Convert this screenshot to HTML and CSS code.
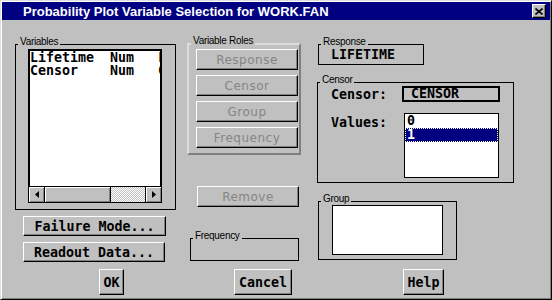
FILE: index.html
```html
<!DOCTYPE html>
<html lang="en">
<head>
    <meta charset="UTF-8">
    <title>Probability Plot Variable Selection</title>
    <link rel="stylesheet" href="styles.css">
</head>
<body>
    <div class="dialog">
        <div class="titlebar">
            <span class="title">Probability Plot Variable Selection for WORK.FAN</span>
            <button class="close-btn">
                <svg width="8" height="7" viewBox="0 0 8 7"><path d="M0.5 0.5L7.5 6.5M7.5 0.5L0.5 6.5" stroke="#000" stroke-width="1.6" fill="none"/></svg>
            </button>
        </div>

        <div class="dialog-body">
            <div class="col col-vars">
                <div class="group vars-group">
                    <span class="group-label">Variables</span>
                    <div class="listbox">
                        <div class="list-items">
                            <div class="list-row">Lifetime  Num   Lifetime</div>
                            <div class="list-row">Censor    Num   Censor</div>
                        </div>
                        <div class="hscroll">
                            <div class="sb-btn">
                                <svg width="4" height="7" viewBox="0 0 4 7"><path d="M4 0L0 3.5L4 7Z" fill="#000"/></svg>
                            </div>
                            <div class="sb-thumb"></div>
                            <div class="sb-track"></div>
                            <div class="sb-btn sb-right">
                                <svg width="4" height="7" viewBox="0 0 4 7"><path d="M0 0L4 3.5L0 7Z" fill="#000"/></svg>
                            </div>
                        </div>
                    </div>
                </div>
                <button class="btn btn-failure">Failure Mode...</button>
                <button class="btn btn-readout">Readout Data...</button>
            </div>

            <div class="col col-roles">
                <div class="roles-group">
                    <span class="group-label">Variable Roles</span>
                    <button class="btn role-btn" disabled>Response</button>
                    <button class="btn role-btn" disabled>Censor</button>
                    <button class="btn role-btn" disabled>Group</button>
                    <button class="btn role-btn" disabled>Frequency</button>
                </div>
                <button class="btn role-btn btn-remove" disabled>Remove</button>
                <div class="group freq-group">
                    <span class="group-label">Frequency</span>
                </div>
            </div>

            <div class="col col-info">
                <div class="group response-group">
                    <span class="group-label">Response</span>
                    LIFETIME
                </div>
                <div class="group censor-group">
                    <span class="group-label">Censor</span>
                    <div class="censor-row">
                        <span class="field-label">Censor:</span>
                        <span class="field-box">CENSOR</span>
                    </div>
                    <div class="values-row">
                        <span class="field-label values-label">Values:</span>
                        <div class="values-list">
                            <div class="value-row">0</div>
                            <div class="value-row selected">1</div>
                        </div>
                    </div>
                </div>
                <div class="group group-group">
                    <span class="group-label">Group</span>
                    <div class="white-box"></div>
                </div>
            </div>
        </div>

        <div class="dialog-footer">
            <button class="btn btn-ok">OK</button>
            <button class="btn btn-cancel">Cancel</button>
            <button class="btn btn-help">Help</button>
        </div>
    </div>
</body>
</html>
```

FILE: styles.css
```css
* {
    box-sizing: border-box;
}

body {
    margin: 0;
    background-color: #c0c0c0;
    font-family: "DejaVu Sans Mono", monospace;
}

.dialog {
    width: 552px;
    height: 300px;
    padding: 1px;
    background: #c0c0c0;
    border: 1px solid;
    border-color: #dfdfdf #000 #000 #dfdfdf;
    box-shadow: inset 1px 1px #fff, inset -1px -1px #808080;
    display: flex;
    flex-direction: column;
}

.titlebar {
    height: 18px;
    flex-shrink: 0;
    background: #000080;
    display: flex;
    align-items: center;
    padding: 0 4px 0 21px;
}

.title {
    flex: 1;
    color: #fff;
    font: bold 13px "Liberation Sans", Arial, sans-serif;
}

.close-btn {
    width: 14px;
    height: 14px;
    padding: 0;
    background: #c0c0c0;
    border: 1px solid;
    border-color: #fff #000 #000 #fff;
    box-shadow: inset -1px -1px #808080;
    display: flex;
    align-items: center;
    justify-content: center;
}

/* body */

.dialog-body {
    height: 249px;
    flex-shrink: 0;
    display: flex;
}

.col {
    display: flex;
    flex-direction: column;
    align-items: flex-start;
}

.col-vars {
    margin-left: 13px;
    width: 161px;
    padding-top: 24px;
}

.col-roles {
    margin-left: 11px;
    width: 114px;
    padding-top: 23px;
}

.col-info {
    margin-left: 16px;
    width: 197px;
    padding-top: 24px;
}

.group {
    position: relative;
    border: 1px solid #000;
}

.group-label {
    position: absolute;
    top: -8px;
    left: 2px;
    padding: 0 2px;
    background: #c0c0c0;
    font: 10px/10px "Liberation Sans", Arial, sans-serif;
    letter-spacing: -0.3px;
    color: #000;
    white-space: nowrap;
}

/* buttons */

.btn {
    padding: 0;
    background: #c0c0c0;
    border: 1px solid;
    border-color: #fff #000 #000 #fff;
    box-shadow: inset -1px -1px #808080;
    font: bold 13.3px "DejaVu Sans Mono", monospace;
    color: #000;
    white-space: pre;
}

.btn-failure {
    margin: 6px 0 0 8px;
    width: 143px;
    height: 20px;
}

.btn-readout {
    margin: 6px 0 0 8px;
    width: 142px;
    height: 20px;
}

.role-btn {
    width: 102px;
    height: 21px;
    font: 12px "DejaVu Sans", sans-serif;
    letter-spacing: 0.5px;
    color: #858585;
}

/* variables list */

.vars-group {
    width: 161px;
    height: 166px;
    padding: 4px 0 0 12px;
}

.listbox {
    width: 134px;
    height: 154px;
    border: 1px solid #000;
    display: flex;
    flex-direction: column;
    background: #fff;
}

.list-items {
    flex: 1;
    border: 1px solid #000;
    border-bottom: 0;
    overflow: hidden;
    font-weight: bold;
    font-size: 13.3px;
    line-height: 13px;
}

.list-row {
    height: 13px;
    white-space: pre;
}

.hscroll {
    height: 16px;
    flex-shrink: 0;
    display: flex;
    border-top: 1px solid #000;
    background: #c0c0c0;
}

.sb-btn {
    width: 16px;
    border-right: 1px solid #000;
    box-shadow: inset 1px 1px #fff, inset -1px -1px #808080;
    display: flex;
    align-items: center;
    justify-content: center;
}

.sb-right {
    border-right: 0;
    border-left: 1px solid #000;
}

.sb-thumb {
    width: 66px;
    border-right: 1px solid #000;
    box-shadow: inset 1px 1px #fff, inset -1px -1px #808080;
}

.sb-track {
    flex: 1;
    background: repeating-conic-gradient(#c0c0c0 0 25%, #fff 0 50%) 0 0 / 2px 2px;
}

/* variable roles */

.roles-group {
    position: relative;
    width: 114px;
    height: 112px;
    border: 2px solid;
    border-color: #dcdcdc #808080 #808080 #dcdcdc;
    padding: 4px 0 0 7px;
    display: flex;
    flex-direction: column;
    gap: 5px;
}

.roles-group .group-label {
    top: -9px;
    left: 2px;
}

.btn-remove {
    margin: 31px 0 0 10px;
}

.freq-group {
    margin: 31px 0 0 3px;
    width: 109px;
    height: 23px;
}

/* right column */

.response-group {
    margin-left: 1px;
    width: 106px;
    height: 21px;
    padding-left: 12px;
    font-weight: bold;
    font-size: 13.3px;
    line-height: 19px;
}

.censor-group {
    margin-top: 17px;
    width: 197px;
    height: 101px;
    padding: 3px 0 0 13px;
    font-weight: bold;
    font-size: 13.3px;
}

.censor-row {
    display: flex;
    align-items: center;
    height: 16px;
}

.field-label {
    width: 71px;
    white-space: pre;
}

.field-box {
    width: 98px;
    height: 16px;
    border: 2px solid #000;
    padding-left: 7px;
    line-height: 12px;
}

.values-row {
    display: flex;
    margin-top: 11px;
}

.values-label {
    width: 73px;
    padding-top: 2px;
}

.values-list {
    width: 95px;
    height: 65px;
    border: 1px solid #000;
    background: #fff;
}

.value-row {
    height: 14px;
    line-height: 14px;
    padding-left: 2px;
}

.value-row.selected {
    background: #000080;
    color: #fff;
    outline: 1px dotted #fff;
    outline-offset: -1px;
}

.group-group {
    margin: 18px 0 0 1px;
    width: 139px;
    height: 59px;
    padding: 3px 0 0 13px;
}

.white-box {
    width: 111px;
    height: 50px;
    border: 1px solid #000;
    background: #fff;
}

/* footer */

.dialog-footer {
    display: flex;
    height: 26px;
    padding-left: 97px;
}

.btn-ok {
    width: 25px;
}

.btn-cancel {
    margin-left: 110px;
    width: 58px;
}

.btn-help {
    margin-left: 111px;
    width: 41px;
}
```
